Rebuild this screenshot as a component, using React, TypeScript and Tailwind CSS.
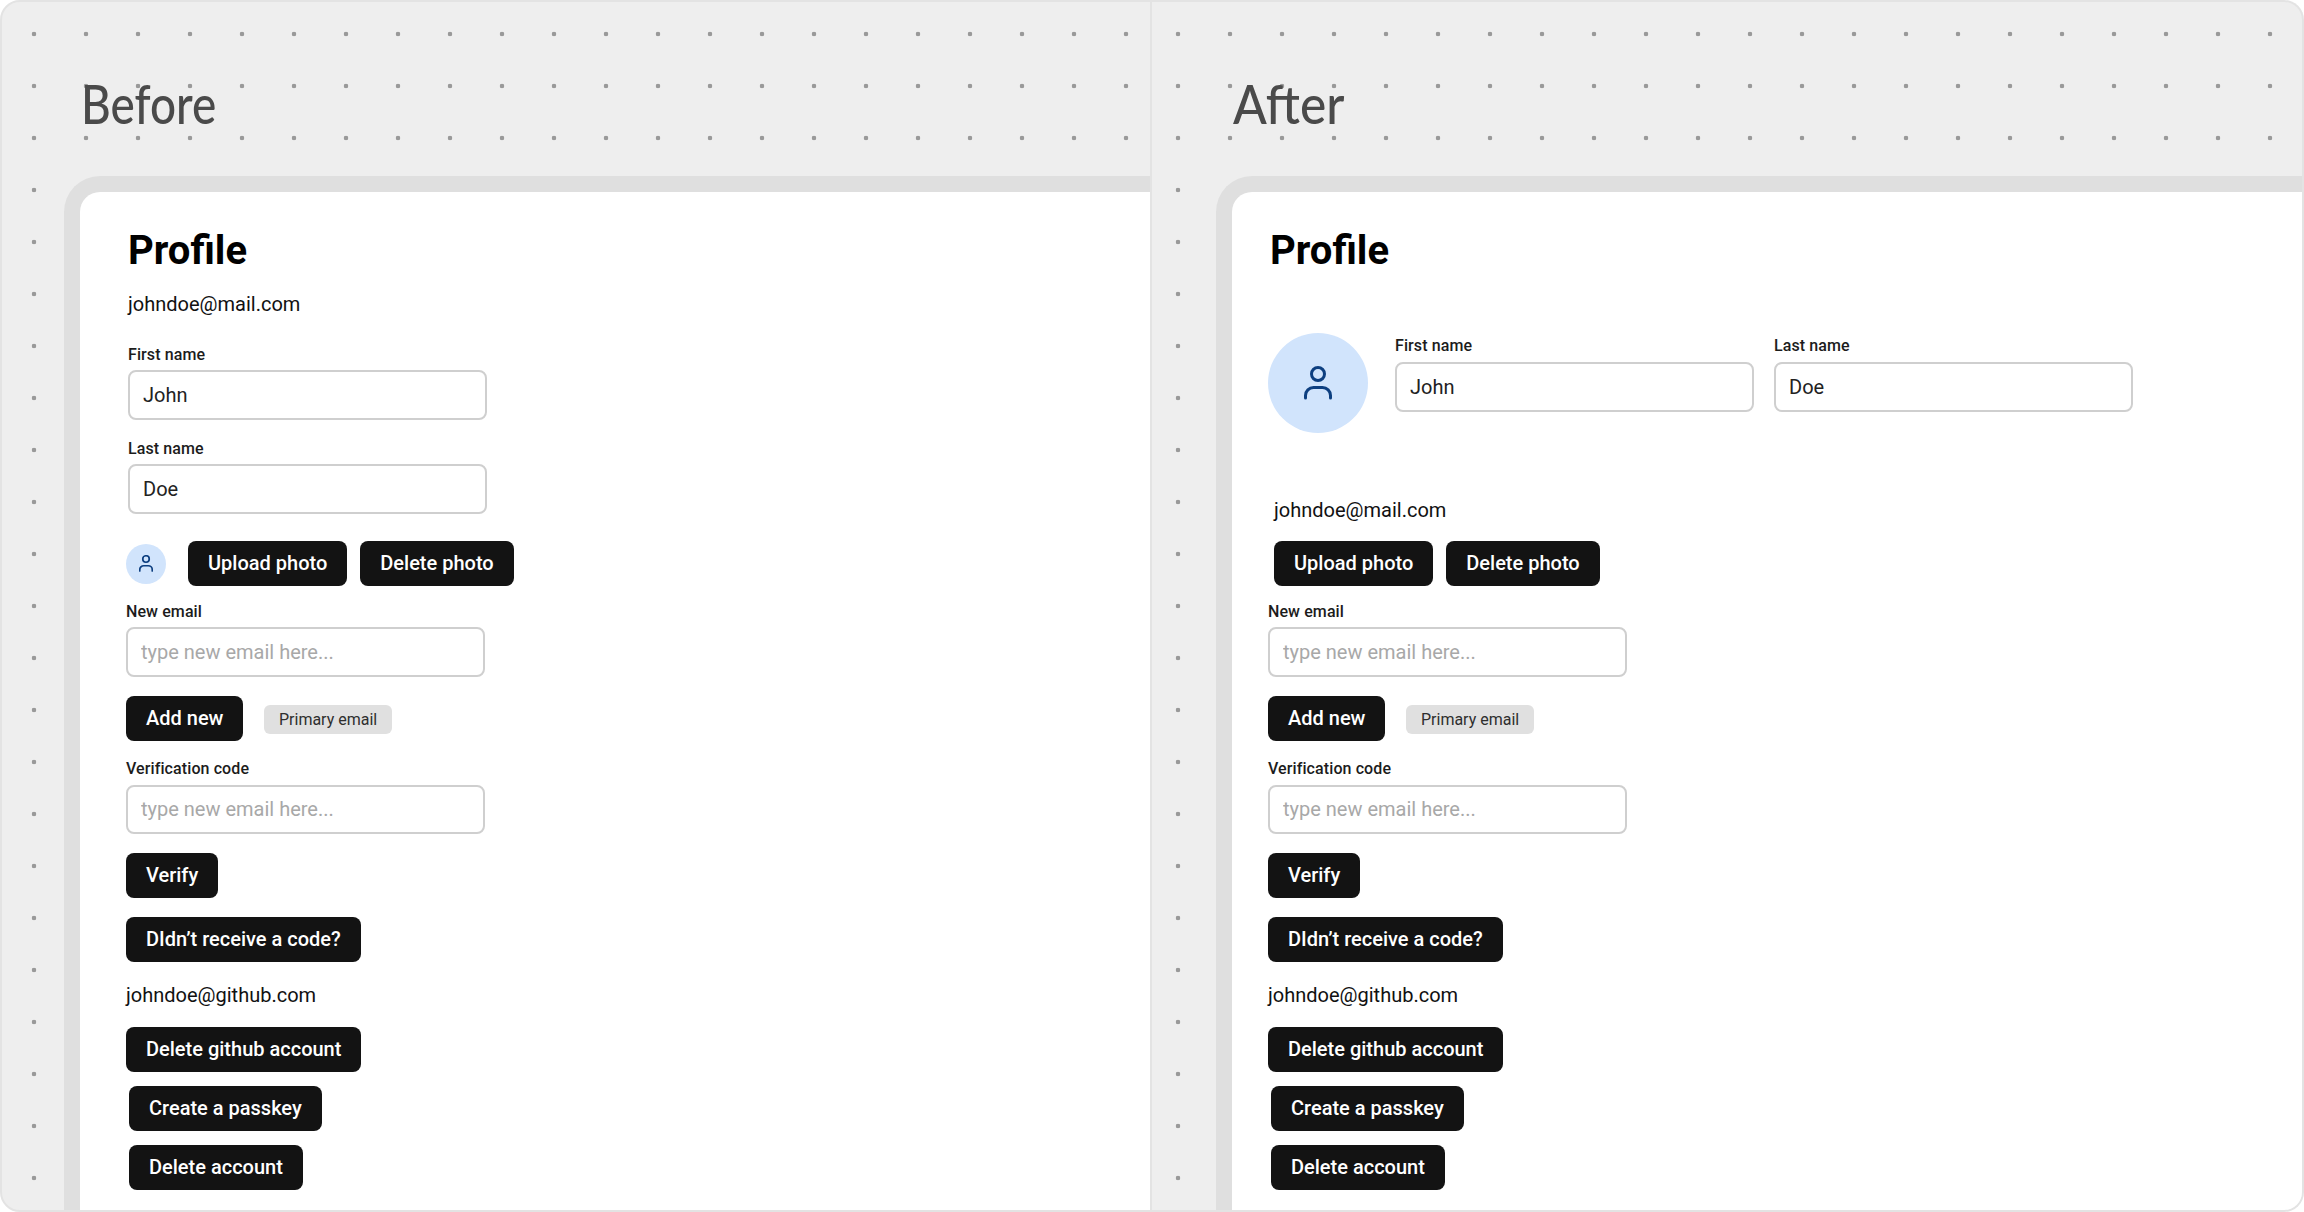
import React from "react";

const Btn = ({ children, className = "" }: { children: React.ReactNode; className?: string }) => (
  <button className={`h-[45px] w-fit shrink-0 rounded-[8px] bg-[#131313] px-5 pb-[2px] text-[20px] font-medium leading-[24px] text-white ${className}`}>
    {children}
  </button>
);

const Field = ({ label, value, placeholder, className = "" }: { label: string; value?: string; placeholder?: string; className?: string }) => (
  <div className={`flex w-[359px] flex-col ${className}`}>
    <label className="h-5 text-[16px] font-medium leading-5 tracking-[0.1px] text-[#1c1c1c]">{label}</label>
    <input
      readOnly
      defaultValue={value}
      placeholder={placeholder}
      className="mt-[6px] h-[50px] w-full rounded-[8px] border-2 border-[#cfcfcf] bg-white px-[13px] pb-[1px] text-[20px] text-[#222222] outline-none placeholder:text-[#a8a8a8]"
    />
  </div>
);

const Person = ({ size }: { size: "lg" | "sm" }) => (
  <svg
    viewBox="0 0 28 34"
    fill="none"
    stroke="#0d3f80"
    strokeWidth={size === "lg" ? 3 : 3.4}
    strokeLinecap="round"
    className={size === "lg" ? "h-[34px] w-[28px]" : "h-[17px] w-[14px]"}
  >
    <circle cx="14" cy="8" r="6.5" />
    <path d="M1.5 32v-2.5a8 8 0 0 1 8-8h9a8 8 0 0 1 8 8V32" />
  </svg>
);

const PhotoButtons = () => (
  <>
    <Btn>Upload photo</Btn>
    <Btn>Delete photo</Btn>
  </>
);

const Shared = () => (
  <>
    <Field label="New email" placeholder="type new email here..." className="mt-4 [&>input]:mt-[5px]" />
    <div className="mt-[19px] flex items-center gap-[21px]">
      <Btn>Add new</Btn>
      <span className="mt-[2px] flex h-[29px] items-center rounded-[6px] bg-[#e0e0e0] px-[14.5px] text-[16px] leading-5 text-[#2e2e2e]">Primary email</span>
    </div>
    <Field label="Verification code" placeholder="type new email here..." className="mt-[18px] [&>input]:h-[49px]" />
    <Btn className="mt-[19px]">Verify</Btn>
    <Btn className="mt-[19px]">DIdn’t receive a code?</Btn>
    <p className="mt-[21px] text-[20px] leading-6 text-[#111111]">johndoe@github.com</p>
    <Btn className="mt-5">Delete github account</Btn>
    <Btn className="mt-[14px] ml-[3px]">Create a passkey</Btn>
    <Btn className="mt-[14px] ml-[3px]">Delete account</Btn>
  </>
);

const Heading = ({ children, className }: { children: string; className: string }) => (
  <h2 className={`h-[60px] origin-left text-[54px] font-medium leading-[60px] text-[#4a4a4a] [font-family:Lato,sans-serif] ${className}`}>{children}</h2>
);

export default function App() {
  return (
    <div className="flex h-[1212px] w-[2304px] overflow-hidden bg-white [font-family:Roboto,sans-serif]">
      <section className="flex h-full w-[1152px] flex-col overflow-hidden rounded-l-[20px] border-2 border-[#e3e3e3] bg-[#eeeeee] bg-[radial-gradient(circle,#999999_2px,transparent_2.6px)] bg-[size:52px_52px] bg-[position:6px_6px] pt-[72px] pl-[62px]">
        <Heading className="mb-[42px] ml-[17px] scale-x-[0.85]">Before</Heading>
        <div className="flex-1 rounded-tl-[36px] border-t-16 border-l-16 border-[#dfdfdf] bg-white pt-[35px] pl-[46px]">
          <div className="flex flex-col">
            <h1 className="ml-[2px] text-[40px] leading-[48px] font-bold text-black">Profile</h1>
            <p className="mt-[17px] ml-[2px] text-[20px] leading-6 text-[#111111]">johndoe@mail.com</p>
            <Field label="First name" value="John" className="mt-[29px] ml-[2px] [&>input]:mt-[5px]" />
            <Field label="Last name" value="Doe" className="mt-[18px] ml-[2px] [&>label]:mt-[1px] [&>input]:mt-[5px]" />
            <div className="mt-[27px] flex items-center">
              <div className="mr-[22px] flex h-10 w-10 items-center justify-center rounded-full bg-[#d1e4fc]">
                <Person size="sm" />
              </div>
              <div className="flex gap-[13px]">
                <PhotoButtons />
              </div>
            </div>
            <Shared />
          </div>
        </div>
      </section>
      <section className="flex h-full w-[1152px] flex-col overflow-hidden rounded-r-[20px] border-y-2 border-r-2 border-[#e3e3e3] bg-[#eeeeee] bg-[radial-gradient(circle,#999999_2px,transparent_2.6px)] bg-[size:52px_52px] bg-[position:0px_6px] pt-[72px] pl-16">
        <Heading className="mb-[42px] ml-[17px] scale-x-[0.92]">After</Heading>
        <div className="flex-1 rounded-tl-[36px] border-t-16 border-l-16 border-[#dfdfdf] bg-white pt-[35px] pl-9">
          <div className="flex flex-col">
            <h1 className="ml-[2px] text-[40px] leading-[48px] font-bold text-black">Profile</h1>
            <div className="mt-[58px] flex items-start">
              <div className="flex h-[100px] w-[100px] items-center justify-center rounded-full bg-[#d1e4fc]">
                <Person size="lg" />
              </div>
              <div className="mt-[3px] ml-[27px] flex gap-5">
                <Field label="First name" value="John" />
                <Field label="Last name" value="Doe" />
              </div>
            </div>
            <p className="mt-[65px] ml-[6px] text-[20px] leading-6 text-[#111111]">johndoe@mail.com</p>
            <div className="mt-[19px] ml-[6px] flex gap-[13px]">
              <PhotoButtons />
            </div>
            <Shared />
          </div>
        </div>
      </section>
    </div>
  );
}
